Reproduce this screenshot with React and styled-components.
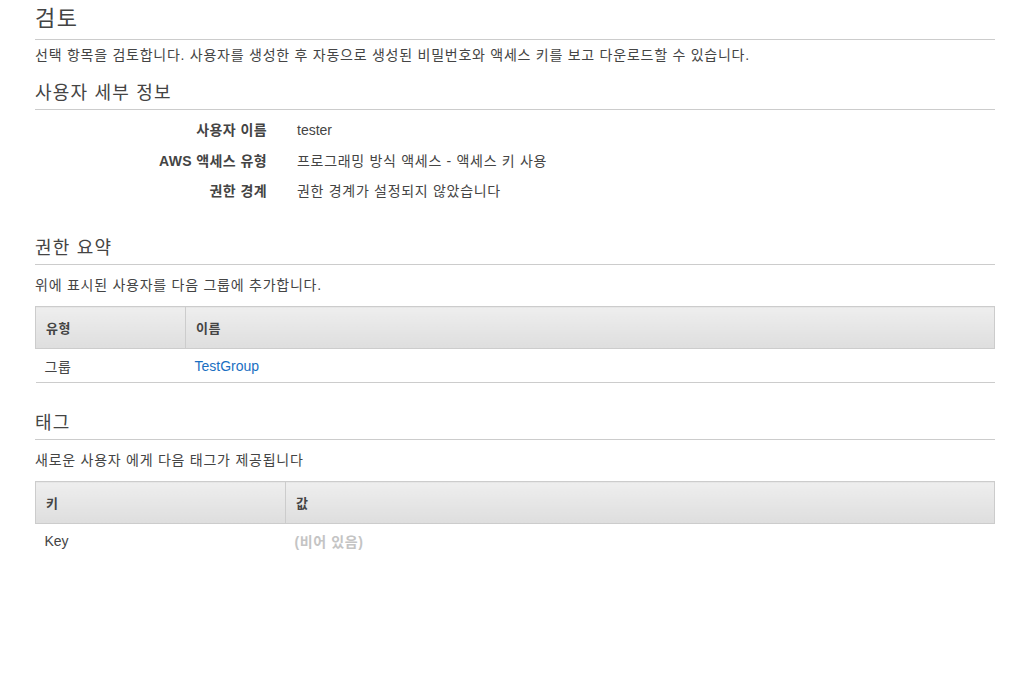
import React from "react";
import styled, { createGlobalStyle } from "styled-components";

const GlobalStyle = createGlobalStyle`
  body {
    margin: 0;
    background: #fff;
    font-family: "Liberation Sans", "Noto Sans CJK KR", sans-serif;
    color: #444;
  }
`;

const Page = styled.div`
  width: 960px;
  padding: 0 0 40px 35px;
`;

const Title = styled.h1`
  margin: 0;
  padding: 4px 0 6px;
  font-size: 22px;
  font-weight: 400;
  line-height: 29px;
  letter-spacing: 1.5px;
  color: #444;
  border-bottom: 1px solid #ccc;
`;

const SectionTitle = styled.h2`
  margin: ${p => p.$top || 0}px 0 0;
  padding-bottom: 4px;
  font-size: 18px;
  font-weight: 400;
  line-height: 24px;
  letter-spacing: 1.2px;
  color: #444;
  border-bottom: 1px solid #ccc;
`;

const Text = styled.p`
  margin: ${p => p.$top || 5}px 0 0;
  font-size: 14px;
  line-height: 20px;
  letter-spacing: 0.75px;
`;

const Details = styled.dl`
  display: grid;
  grid-template-columns: 232px 1fr;
  column-gap: 30px;
  row-gap: 10.5px;
  margin: 10px 0 0;
  font-size: 14px;
  line-height: 20px;
  letter-spacing: 0.7px;
`;

const Label = styled.dt`
  text-align: right;
  font-weight: 700;
  letter-spacing: 0.4px;
`;

const Value = styled.dd`
  margin: 0;
`;

const Latin = styled.span`
  letter-spacing: 0;
`;

const Table = styled.table`
  width: 100%;
  margin-top: 11px;
  border-collapse: collapse;
  table-layout: fixed;
  font-size: 14px;
  letter-spacing: 0.6px;
`;

const Th = styled.th`
  box-sizing: border-box;
  width: ${p => p.$width || "auto"};
  height: 42px;
  padding: 0 10px;
  text-align: left;
  font-weight: 700;
  font-size: 13px;
  color: #444;
  background: linear-gradient(#eeeeee, #dedede);
  border: 1px solid #ccc;
`;

const Td = styled.td`
  height: 33px;
  padding: 0 9px;
  border-bottom: ${p => (p.$noline ? "none" : "1px solid #ccc")};
`;

const Link = styled.a`
  color: #1a6fc2;
  text-decoration: none;
  letter-spacing: 0;
`;

const Empty = styled.span`
  color: #c4c4c4;
  font-weight: 700;
`;

export default function App() {
  return (
    <Page>
      <GlobalStyle />
      <Title>검토</Title>
      <Text $top={5}>
        선택 항목을 검토합니다. 사용자를 생성한 후 자동으로 생성된 비밀번호와 액세스 키를 보고 다운로드할 수 있습니다.
      </Text>

      <SectionTitle $top={16}>사용자 세부 정보</SectionTitle>
      <Details>
        <Label>사용자 이름</Label>
        <Value>
          <Latin>tester</Latin>
        </Value>
        <Label>AWS 액세스 유형</Label>
        <Value>프로그래밍 방식 액세스 - 액세스 키 사용</Value>
        <Label>권한 경계</Label>
        <Value>권한 경계가 설정되지 않았습니다</Value>
      </Details>

      <SectionTitle $top={35}>권한 요약</SectionTitle>
      <Text $top={10}>위에 표시된 사용자를 다음 그룹에 추가합니다.</Text>
      <Table>
        <thead>
          <tr>
            <Th $width="150px">유형</Th>
            <Th>이름</Th>
          </tr>
        </thead>
        <tbody>
          <tr>
            <Td>그룹</Td>
            <Td>
              <Link href="#">TestGroup</Link>
            </Td>
          </tr>
        </tbody>
      </Table>

      <SectionTitle $top={28}>태그</SectionTitle>
      <Text $top={10}>새로운 사용자 에게 다음 태그가 제공됩니다</Text>
      <Table>
        <thead>
          <tr>
            <Th $width="250px">키</Th>
            <Th>값</Th>
          </tr>
        </thead>
        <tbody>
          <tr>
            <Td $noline>
              <Latin>Key</Latin>
            </Td>
            <Td $noline>
              <Empty>(비어 있음)</Empty>
            </Td>
          </tr>
        </tbody>
      </Table>
    </Page>
  );
}
